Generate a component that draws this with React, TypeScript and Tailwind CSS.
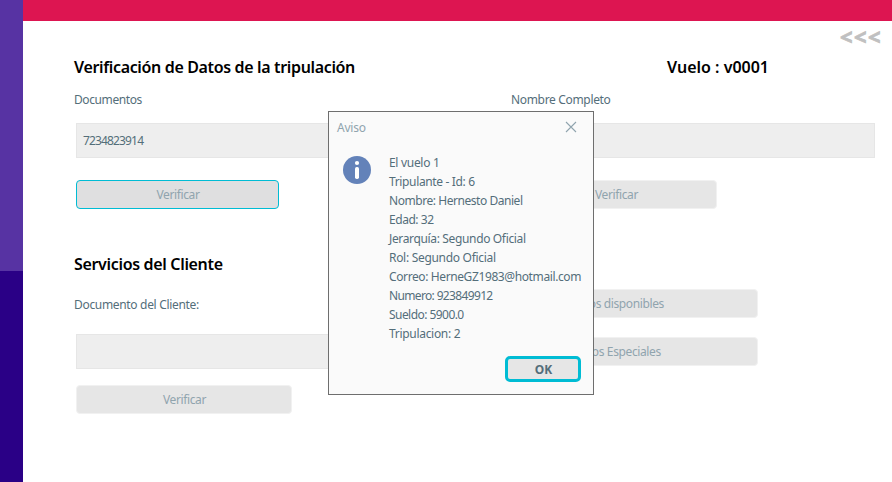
import type { ReactNode } from "react";

const details = [
  { text: "El vuelo 1", tracking: "tracking-[-0.3px]" },
  { text: "Tripulante - Id: 6", tracking: "tracking-[-0.35px]" },
  { text: "Nombre: Hernesto Daniel", tracking: "tracking-[-0.45px]" },
  { text: "Edad: 32", tracking: "tracking-[-0.45px]" },
  { text: "Jerarquía: Segundo Oficial", tracking: "tracking-[-0.35px]" },
  { text: "Rol: Segundo Oficial", tracking: "tracking-[-0.3px]" },
  { text: "Correo: HerneGZ1983@hotmail.com", tracking: "tracking-[-0.39px]" },
  { text: "Numero: 923849912", tracking: "tracking-[-0.65px]" },
  { text: "Sueldo: 5900.0", tracking: "tracking-[-0.55px]" },
  { text: "Tripulacion: 2", tracking: "tracking-[-0.3px]" },
];

function Heading({ children, className = "" }: { children: ReactNode; className?: string }) {
  return <h2 className={`h-6 text-[16px] leading-6 font-semibold whitespace-nowrap text-black ${className}`}>{children}</h2>;
}

function Field({ value = "", className = "" }: { value?: string; className?: string }) {
  return (
    <div className={`flex h-[35px] items-center border border-[#e6e6e6] bg-[#eeeeee] px-1.5 tracking-[-0.85px] text-[#546e7a] ${className}`}>
      {value}
    </div>
  );
}

function DisabledButton({ children, className = "" }: { children: ReactNode; className?: string }) {
  return (
    <button disabled className={`block h-[29px] rounded-[4px] border pl-px tracking-[-0.38px] text-[#90a4ae] ${className}`}>
      {children}
    </button>
  );
}

const plain = "border-[#f1f1f1] bg-[#e6e6e6]";

function Dialog() {
  return (
    <div className="absolute top-[111px] left-[328px] h-[284px] w-[266px] border border-[#6e6e6e] bg-[#fafafa]">
      <div className="flex h-[32px] items-center justify-between pr-4 pl-2 text-[#90a4ae]">
        <span className="tracking-[-0.2px]">Aviso</span>
        <svg className="mb-0.5" width="12" height="12" viewBox="0 0 12 12" stroke="#90a4ae" strokeWidth="1.1">
          <path d="M1 1L11 11M11 1L1 11" />
        </svg>
      </div>
      <div className="flex pt-[9px]">
        <svg className="mt-[3px] ml-[14px] shrink-0" width="28" height="28" viewBox="0 0 28 28">
          <circle cx="14" cy="14" r="14" fill="#6382b9" />
          <circle cx="14" cy="7" r="2.1" fill="#fff" />
          <rect x="12" y="11" width="4" height="12" rx="1.7" fill="#fff" />
        </svg>
        <div className="ml-[18px] text-[#546e7a]">
          {details.map((d) => (
            <div key={d.text} className={`h-[19px] leading-[19px] whitespace-nowrap ${d.tracking}`}>{d.text}</div>
          ))}
        </div>
      </div>
      <button className="mt-[13px] ml-[176px] block h-[26px] w-[76px] rounded-[5px] border-[3px] border-[#00bcd4] bg-[#e6e6e6] pt-px pl-px font-bold text-[#546e7a]">
        OK
      </button>
    </div>
  );
}

export default function App() {
  return (
    <div className="relative flex h-[482px] w-[892px] overflow-hidden bg-white font-['Noto_Sans',sans-serif] text-[12px] leading-[18px] text-[#546e7a]">
      <aside className="w-[23px] shrink-0 bg-[#2a0086]">
        <div className="h-[271px] bg-[#5733a3]" />
      </aside>
      <main className="flex-1">
        <div className="h-[21px] bg-[#dd1551]" />
        <div className="flex h-[34px] justify-end pr-[10px] text-[22px] leading-[30px] font-bold tracking-[1.4px] text-[#c0c0c0] [-webkit-text-stroke:0.8px_#c0c0c0]">&lt;&lt;&lt;</div>
        <div className="flex pl-[51px]">
          <Heading className="w-[593px] tracking-[-0.35px]">Verificación de Datos de la tripulación</Heading>
          <Heading>Vuelo : v0001</Heading>
        </div>
        <div className="mt-3 flex h-[18px] pl-[51px]">
          <span className="w-[437px] tracking-[-0.4px]">Documentos</span>
          <span className="tracking-[-0.33px]">Nombre Completo</span>
        </div>
        <div className="mt-[14px] flex justify-between pr-[17px] pl-[53px]">
          <Field value="7234823914" className="w-[362px]" />
          <Field className="w-[362px]" />
        </div>
        <div className="mt-[22px] flex gap-[236px] pl-[53px]">
          <DisabledButton className="w-[203px] border-[#00bcd4] bg-[#dfdfe0]">Verificar</DisabledButton>
          <DisabledButton className={`w-[202px] ${plain}`}>Verificar</DisabledButton>
        </div>
        <section className="mt-[43px]">
          <Heading className="ml-[51px] tracking-[-0.33px]">Servicios del Cliente</Heading>
          <div className="flex">
            <div className="w-[437px] pt-5">
              <div className="pl-[51px] tracking-[-0.32px]">Documento del Cliente:</div>
              <Field className="mt-5 ml-[53px] w-[362px]" />
              <DisabledButton className={`mt-4 ml-[53px] w-[216px] ${plain}`}>Verificar</DisabledButton>
            </div>
            <div className="pt-[13px]">
              <DisabledButton className={`w-[298px] ${plain}`}>Servicios disponibles</DisabledButton>
              <DisabledButton className={`mt-[19px] w-[298px] ${plain}`}>Servicios Especiales</DisabledButton>
            </div>
          </div>
        </section>
      </main>
      <Dialog />
    </div>
  );
}
